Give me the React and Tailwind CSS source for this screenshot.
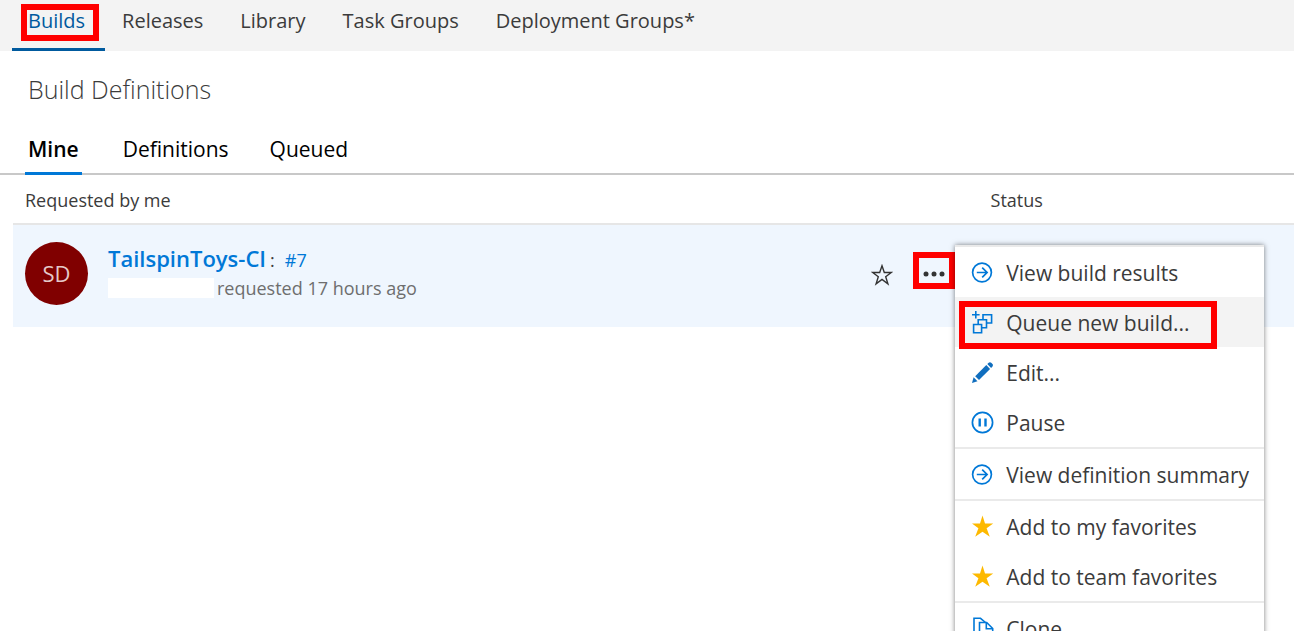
import React from "react";

const iconClass = "size-6 shrink-0";

function ArrowCircleIcon() {
  return (
    <svg className={iconClass} viewBox="0 0 24 24" fill="none" stroke="#0078d7" strokeWidth="1.7" aria-hidden="true">
      <circle cx="12" cy="11.5" r="9.4" />
      <path d="M6.8 11.5h10M12.2 6.6l4.9 4.9-4.9 4.9" />
    </svg>
  );
}

function QueueIcon() {
  return (
    <svg className={iconClass} viewBox="0 0 24 24" fill="none" stroke="#0078d7" strokeWidth="1.6" aria-hidden="true">
      <path d="M5.8 0v7.500M2 3.700h7.600" />
      <path d="M3.600 13.500h8v8.300h-8z" />
      <path d="M8.200 13.500V8.700h8.300v8h-4.900" />
      <path d="M13 8.700V3.700h8.600v8.300h-5.100" />
    </svg>
  );
}

function PencilIcon() {
  return (
    <svg className={iconClass} viewBox="0 0 24 24" fill="#106ebe" aria-hidden="true">
      <path d="M5.200 15.200 16.300 4.100l3.800 3.800L9 19z" />
      <path d="m17.300 3.100 1.400-1.300c.7-.7 1.800-.7 2.500 0l1.300 1.300c.6.7.6 1.600 0 2.300l-1.400 1.500z" />
      <path d="M3.600 16.300 7.500 20.200 2 22z" />
    </svg>
  );
}

function PauseIcon() {
  return (
    <svg className={iconClass} viewBox="0 0 24 24" fill="none" stroke="#0078d7" aria-hidden="true">
      <circle cx="12.500" cy="11.500" r="10.100" strokeWidth="1.700" />
      <path d="M9.700 7.500v8M15.500 7.500v8" strokeWidth="2.400" />
    </svg>
  );
}

function StarIcon() {
  return (
    <svg className={iconClass} viewBox="0 0 24 24" fill="#fdb900" aria-hidden="true">
      <path d="m12.500.5 2.500 8h8.200l-6.600 4.700 3.200 8.500-7.300-5-7.300 5 3.200-8.500L2 8.500h8z" />
    </svg>
  );
}

function CloneIcon() {
  return (
    <svg className={iconClass} viewBox="0 0 24 24" fill="none" stroke="#0078d7" strokeWidth="1.600" aria-hidden="true">
      <path d="M8.500 18.500H4V1.300h6.500l5 4.200" />
      <path d="M9.500 5.500h7.200l6 6v10.500H9.500zM16.300 5.800v6h6.200" />
    </svg>
  );
}

const menuGroups = [
  [
    { label: "View build results", Icon: ArrowCircleIcon },
    { label: "Queue new build...", Icon: QueueIcon, active: true },
    { label: "Edit...", Icon: PencilIcon },
    { label: "Pause", Icon: PauseIcon },
  ],
  [{ label: "View definition summary", Icon: ArrowCircleIcon }],
  [
    { label: "Add to my favorites", Icon: StarIcon },
    { label: "Add to team favorites", Icon: StarIcon },
  ],
  [{ label: "Clone", Icon: CloneIcon }],
];

function Highlight({ className }) {
  return <span aria-hidden="true" className={`pointer-events-none absolute border-6 border-[#ff0000] ${className}`} />;
}

function ContextMenu() {
  return (
    <div
      role="menu"
      className="absolute top-0 left-full w-[309px] border-t-2 border-[#eaeaea] bg-white text-left shadow-[0_0_5px_rgba(0,0,0,0.5)]"
    >
      {menuGroups.map((group, i) => (
        <div key={i} role="group" className="border-b-2 border-[#eaeaea]">
          {group.map(({ label, Icon, active }) => (
            <button
              key={label}
              type="button"
              role="menuitem"
              className={`relative flex h-[50px] w-full items-center gap-3 pt-[2px] pl-[15px] text-[21px] whitespace-nowrap text-[#3b3b3b] ${active ? "bg-[#f3f3f3]" : ""}`}
            >
              <Icon />
              <span className="pt-[2px]">{label}</span>
              {active && <Highlight className="top-1 left-1 h-12 w-[258px]" />}
            </button>
          ))}
        </div>
      ))}
    </div>
  );
}

export default function App() {
  return (
    <div className="h-screen overflow-hidden bg-white font-['Open_Sans','Noto_Sans',sans-serif] text-[#3b3b3b]">
      <nav className="flex h-[51px] gap-[37px] bg-[#f3f3f3] px-7 text-[20px]">
        <a href="#builds" className="relative -mr-5 -ml-4 border-b-3 border-[#005a9e] pt-[6px] pr-5 pl-4 text-[#005a9e]">
          Builds
          <Highlight className="top-1 left-[9px] h-[37px] w-[78px]" />
        </a>
        {["Releases", "Library", "Task Groups", "Deployment Groups*"].map((t) => (
          <a key={t} href="#" className="pt-[6px]">
            {t}
          </a>
        ))}
      </nav>

      <h1 className="px-7 pt-5 text-[25px] leading-9 font-light">Build Definitions</h1>

      <div className="mt-5 flex h-[48px] gap-[41px] border-b-2 border-[#c8c8c8] px-[25px] text-[21px] text-black">
        <a href="#mine" className="-mb-[2px] border-b-3 border-[#0078d7] px-[3px] pt-[7px] font-semibold">
          Mine
        </a>
        <a href="#definitions" className="pt-[7px]">
          Definitions
        </a>
        <a href="#queued" className="pt-[7px]">
          Queued
        </a>
      </div>

      <div className="pl-[13px]">
        <table className="w-full border-collapse text-left">
          <thead>
            <tr className="h-[49px] border-b-2 border-[#e6e6e6] text-lg">
              <th className="w-[67%] pt-[2px] pl-3 font-normal">Requested by me</th>
              <th className="w-[9%]" aria-label="Actions" />
              <th className="pt-[2px] pl-1 font-normal">Status</th>
            </tr>
          </thead>
          <tbody>
            <tr className="h-[103px] bg-[#eff6fe] align-top">
              <td className="pt-[17px] pl-3">
                <div className="flex gap-5">
                  <span className="flex size-[63px] items-center justify-center rounded-full bg-[#800000] text-[22px] text-[#e4c8c8]">
                    SD
                  </span>
                  <div>
                    <div className="flex items-baseline gap-1">
                      <a href="#definition" className="text-[22px] leading-8 font-semibold text-[#0078d7]">
                        TailspinToys-CI
                      </a>
                      <span className="text-lg">:</span>
                      <a href="#build-7" className="ml-[6px] text-lg text-[#0078d7]">
                        #7
                      </a>
                    </div>
                    <div className="mt-[2px] flex items-center gap-[3px] text-lg leading-6 text-[#6e6e6e]">
                      <span className="h-5 w-[106px] bg-white" />
                      <span>requested 17 hours ago</span>
                    </div>
                  </div>
                </div>
              </td>
              <td className="pt-5">
                <div className="relative -mr-9 flex w-[84px] items-start gap-5">
                  <button type="button" aria-label="Add to favorites" className="mt-[19px] size-[22px]">
                    <svg viewBox="0 0 22 22" fill="none" stroke="#333" strokeWidth="1.400" aria-hidden="true">
                      <path d="m11 1.800 2.300 6.700h7l-5.600 4.200 2.200 7.200-5.900-4.500-5.900 4.500 2.200-7.200L1.700 8.500h7z" />
                    </svg>
                  </button>
                  <div className="relative">
                    <button type="button" aria-label="More actions" className="relative mt-[7px] flex h-[37px] w-[42px] items-center justify-center">
                      <svg className="mt-[6px] h-[6px] w-[22px]" viewBox="0 0 22 6" fill="#333" aria-hidden="true">
                        <circle cx="3" cy="3" r="2.500" />
                        <circle cx="11" cy="3" r="2.500" />
                        <circle cx="19" cy="3" r="2.500" />
                      </svg>
                      <Highlight className="inset-0" />
                    </button>
                    <ContextMenu />
                  </div>
                </div>
              </td>
              <td />
            </tr>
          </tbody>
        </table>
      </div>
    </div>
  );
}
